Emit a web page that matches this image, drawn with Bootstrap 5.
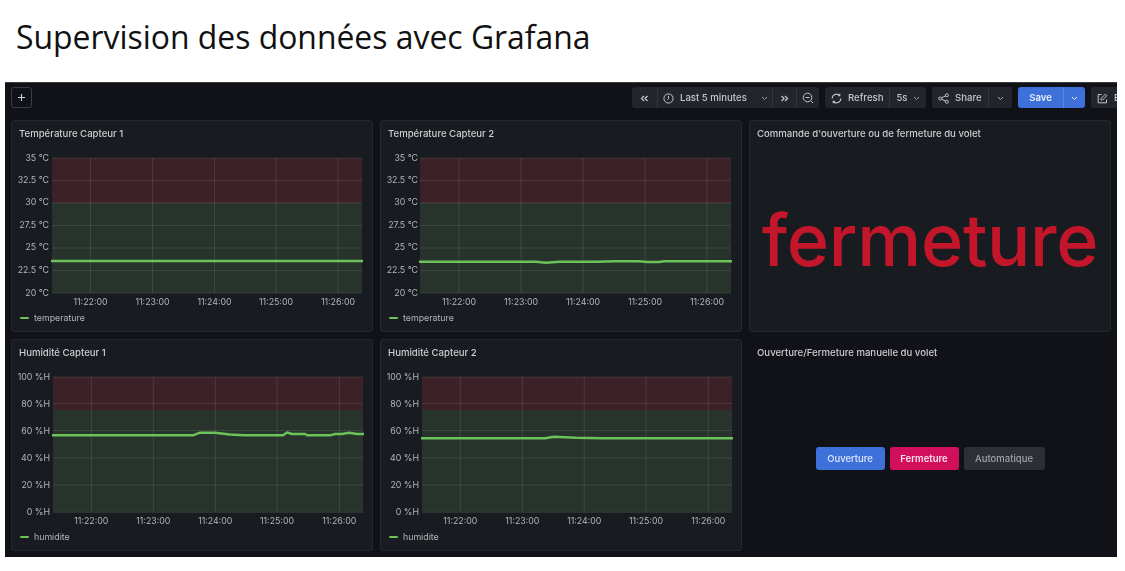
<!DOCTYPE html>
<html lang="fr">
<head>
<meta charset="utf-8">
<title>Supervision des données avec Grafana</title>
<link href="https://cdn.jsdelivr.net/npm/bootstrap@5.3.0/dist/css/bootstrap.min.css" rel="stylesheet">
<style>
html,body{background:#fff;height:571px;overflow:hidden}
.slide-title{font-family:"Open Sans",sans-serif;font-size:31.9px;font-weight:400;color:#111;line-height:42px;margin:0;padding:16px 0 24px 16px}
.dash{margin-left:5px;width:1112px;height:475px;background:#111217;overflow:hidden;font-family:Inter,"Liberation Sans",sans-serif;border-top:1px solid #3a3c40;padding:4px 0 0 6px;filter:blur(.35px)}
.tbar{height:21px;margin-bottom:12px;width:1130px}
.tb{height:21px;background:#22252b;color:#c5c6cb;font-size:9.6px;font-weight:500;display:flex;align-items:center;justify-content:center;gap:5px;border:0;padding:1px 0 0;white-space:nowrap}
.tb+.tb{border-left:1px solid #33363d}
.tb.lft{justify-content:flex-start;padding-left:6px;gap:6px}
.tb.lft.tight{padding-left:5px}
.tgrp{border-radius:3px;overflow:hidden;flex:none}
.tb svg{flex:none}
.plus{width:21px;height:21px;border:1px solid #3a3d44;border-radius:3px;color:#d0d1d5;background:transparent;padding:0;margin-right:600px;flex:none;display:flex;align-items:center;justify-content:center}
.w25{width:25px}.w115{width:115px}.w24{width:24px}.w23{width:23px}.w64{width:64px}.w37{width:37px}.w56{width:56px}.w45{width:45px}.w22{width:22px}.w60{width:60px}
.tb.blue{background:#3d71d9;color:#e8eefb;font-weight:600}
.tb.blue+.tb.blue{border-left-color:#5a86df}
.sep6{margin-right:6px}
.pgrid{display:grid;grid-template-columns:repeat(3,362px);grid-auto-rows:212px;gap:7px}
.pnl{background:#181b1f;border:1px solid #25282e;border-radius:3px;display:flex;flex-direction:column;min-width:0}
.pnl.bare{background:transparent;border-color:transparent}
.ptitle{height:27px;padding:0 0 0 7px;font-size:9.6px;font-weight:500;color:#ccccd1;line-height:25px;white-space:nowrap;flex:none}
.chart{display:block;flex:none}
.chart text{font-family:Inter,"Liberation Sans",sans-serif;font-size:8.8px;fill:#b4b5ba}
.gl{stroke:rgba(255,255,255,.1);stroke-width:1;fill:none}
.dl{stroke:#6cc35a;stroke-width:2.4;fill:none;stroke-linejoin:round}
.lgd{display:flex;align-items:center;gap:5px;padding:0 0 0 8px;height:14px;font-size:8.8px;color:#b4b5ba}
.swatch{width:9px;height:2.5px;background:#6cc35a;border-radius:1px;flex:none}
.bigval{flex:1;display:flex;align-items:center;justify-content:center;color:#c4162a;font-size:72px;font-weight:500;line-height:1;letter-spacing:-.3px}
.actions{flex:1;display:flex;align-items:center;justify-content:center;gap:5px}
.act{height:23px;border:0;border-radius:3px;font-size:9.5px;font-weight:500;padding:2px 0 0;display:flex;align-items:center;justify-content:center}
.act-a{width:69px;background:#3d71d9;color:#dfe7fa}
.act-b{width:69px;background:#d10f5a;color:#fbe4ee;font-weight:600}
.act-c{width:81px;background:#2c2f36;color:#a0a2a9}
</style>
</head>
<body>
<h1 class="slide-title">Supervision des données avec Grafana</h1>
<div class="dash">
  <div class="tbar d-flex align-items-center gap-0">
    <button class="plus" aria-label="Ajouter"><svg width="9" height="9" viewBox="0 0 9 9"><path d="M4.5 1v7M1 4.5h7" stroke="#d0d1d5" stroke-width="1.1"/></svg></button>
    <div class="tgrp d-flex sep6">
      <div class="tb w25"><svg width="9" height="7" viewBox="0 0 9 7" fill="none" stroke="#c5c6cb" stroke-width="1.3"><path d="M4 1 1.500 3.500 4 6M7.500 1 5 3.500 7.500 6"/></svg></div>
      <div class="tb lft tight w115"><svg width="11" height="11" viewBox="0 0 11 11" fill="none" stroke="#c5c6cb"><circle cx="5.500" cy="5.500" r="4.600"/><path d="M5.500 2.800v2.900l-1.200 1"/></svg><span>Last 5 minutes</span><svg class="ms-2" width="7" height="5" viewBox="0 0 7 5" fill="none" stroke="#9a9ca3"><path d="M1 1l2.500 2.500L6 1"/></svg></div>
      <div class="tb w24"><svg width="9" height="7" viewBox="0 0 9 7" fill="none" stroke="#c5c6cb" stroke-width="1.3"><path d="M1.500 1 4 3.500 1.500 6M5 1l2.500 2.500L5 6"/></svg></div>
      <div class="tb w23"><svg width="12" height="12" viewBox="0 0 12 12" fill="none" stroke="#c5c6cb"><circle cx="5.500" cy="5.500" r="4.300"/><path d="M3.500 5.500h4M8.600 8.600 11 11"/></svg></div>
    </div>
    <div class="tgrp d-flex sep6">
      <div class="tb lft w64"><svg width="11" height="11" viewBox="0 0 11 11" fill="none" stroke="#c5c6cb" stroke-width="1.100"><path d="M1.200 5.500A4.300 4.300 0 0 1 8.600 2.500M9.800 5.500A4.300 4.300 0 0 1 2.400 8.500"/><path d="M8.800.8v2H6.900M2.200 10.200v-2h1.900"/></svg><span>Refresh</span></div>
      <div class="tb w37"><span>5s</span><svg width="7" height="5" viewBox="0 0 7 5" fill="none" stroke="#9a9ca3"><path d="M1 1l2.500 2.500L6 1"/></svg></div>
    </div>
    <div class="tgrp d-flex sep6">
      <div class="tb lft w56"><svg width="11" height="11" viewBox="0 0 11 11" fill="none" stroke="#c5c6cb"><circle cx="2.200" cy="5.500" r="1.500"/><circle cx="8.800" cy="2.300" r="1.500"/><circle cx="8.800" cy="8.700" r="1.500"/><path d="M3.500 4.800l4-1.800M3.500 6.200l4 1.800"/></svg><span>Share</span></div>
      <div class="tb w24"><svg width="7" height="5" viewBox="0 0 7 5" fill="none" stroke="#b0b2b8"><path d="M1 1l2.500 2.500L6 1"/></svg></div>
    </div>
    <div class="tgrp d-flex sep6">
      <div class="tb blue w45">Save</div>
      <div class="tb blue w22"><svg width="7" height="5" viewBox="0 0 7 5" fill="none" stroke="#e8eefb"><path d="M1 1l2.500 2.500L6 1"/></svg></div>
    </div>
    <div class="tgrp d-flex">
      <div class="tb lft w60"><svg width="11" height="11" viewBox="0 0 11 11" fill="none" stroke="#c5c6cb"><path d="M9.500 6.500v3.300h-8.300V1.500h3.300"/><path d="M4 5.500 8.300 1.200l1.500 1.500L5.500 7H4z"/></svg><span>Edit</span></div>
    </div>
  </div>

  <div class="pgrid">
    <div class="pnl">
      <div class="ptitle">Température Capteur 1</div>
      <svg class="chart" width="360" height="163" viewBox="0 0 360 163">
        <rect x="40" y="10" width="310" height="45" fill="#3c2228"/><rect x="40" y="55" width="310" height="90" fill="#28332c"/>
        <path class="gl" d="M40 10h310M40 32.500h310M40 55h310M40 77.500h310M40 100h310M40 122.500h310M40 145h310M78.500 10v135M140.500 10v135M202.500 10v135M264 10v135M326 10v135"/>
        <path class="dl" d="M39 113H351"/>
        <g text-anchor="end"><text x="37" y="12.500">35 °C</text><text x="37" y="35">32.5 °C</text><text x="37" y="57">30 °C</text><text x="37" y="80">27.5 °C</text><text x="37" y="102">25 °C</text><text x="37" y="125">22.5 °C</text><text x="37" y="147.500">20 °C</text></g>
        <g text-anchor="middle"><text x="78.500" y="157">11:22:00</text><text x="140.500" y="157">11:23:00</text><text x="202.500" y="157">11:24:00</text><text x="264" y="157">11:25:00</text><text x="326" y="157">11:26:00</text></g>
      </svg>
      <div class="lgd"><span class="swatch"></span><span>temperature</span></div>
    </div>
    <div class="pnl">
      <div class="ptitle">Température Capteur 2</div>
      <svg class="chart" width="360" height="163" viewBox="0 0 360 163">
        <rect x="39" y="10" width="311" height="45" fill="#3c2228"/><rect x="39" y="55" width="311" height="90" fill="#28332c"/>
        <path class="gl" d="M39 10h311M39 32.500h311M39 55h311M39 77.500h311M39 100h311M39 122.500h311M39 145h311M78 10v135M140 10v135M202 10v135M264 10v135M326 10v135"/>
        <path class="dl" d="M38 113.700H155L165 114.700 178 113.700H215L235 113.300H258L266 114H278L283 113.300H351"/>
        <g text-anchor="end"><text x="37" y="12.500">35 °C</text><text x="37" y="35">32.5 °C</text><text x="37" y="57">30 °C</text><text x="37" y="80">27.5 °C</text><text x="37" y="102">25 °C</text><text x="37" y="125">22.5 °C</text><text x="37" y="147.500">20 °C</text></g>
        <g text-anchor="middle"><text x="78" y="157">11:22:00</text><text x="140" y="157">11:23:00</text><text x="202" y="157">11:24:00</text><text x="264" y="157">11:25:00</text><text x="326" y="157">11:26:00</text></g>
      </svg>
      <div class="lgd"><span class="swatch"></span><span>temperature</span></div>
    </div>
    <div class="pnl">
      <div class="ptitle">Commande d'ouverture ou de fermeture du volet</div>
      <div class="bigval">fermeture</div>
    </div>
    <div class="pnl">
      <div class="ptitle">Humidité Capteur 1</div>
      <svg class="chart" width="360" height="163" viewBox="0 0 360 163">
        <rect x="41" y="10" width="310" height="33" fill="#3c2228"/><rect x="41" y="43" width="310" height="102.300" fill="#28332c"/>
        <path class="gl" d="M41 10h310M41 36.500h310M41 63.500h310M41 91h310M41 118h310M41 145.300h310M79.300 10v135M141.300 10v135M203.300 10v135M265 10v135M327.300 10v135"/>
        <path class="dl" d="M40 68.300H181L188 65.700H203L218 67.500 232 68.300H271L275 65.500 280 67H293L295 68.300H318L323 67H330L337 65.700 345 67H352"/>
        <g text-anchor="end"><text x="38" y="13">100 %H</text><text x="38" y="39.500">80 %H</text><text x="38" y="66.500">60 %H</text><text x="38" y="94">40 %H</text><text x="38" y="121">20 %H</text><text x="38" y="148">0 %H</text></g>
        <g text-anchor="middle"><text x="79.300" y="157">11:22:00</text><text x="141.300" y="157">11:23:00</text><text x="203.300" y="157">11:24:00</text><text x="265" y="157">11:25:00</text><text x="327.300" y="157">11:26:00</text></g>
      </svg>
      <div class="lgd"><span class="swatch"></span><span>humidite</span></div>
    </div>
    <div class="pnl">
      <div class="ptitle">Humidité Capteur 2</div>
      <svg class="chart" width="360" height="163" viewBox="0 0 360 163">
        <rect x="41" y="10" width="310" height="33" fill="#3c2228"/><rect x="41" y="43" width="310" height="102.300" fill="#28332c"/>
        <path class="gl" d="M41 10h310M41 36.500h310M41 63.500h310M41 91h310M41 118h310M41 145.300h310M79.300 10v135M141.300 10v135M203.300 10v135M265 10v135M327.300 10v135"/>
        <path class="dl" d="M40 71.300H164L173 69.800 195 70.800 220 71.300H352"/>
        <g text-anchor="end"><text x="38" y="13">100 %H</text><text x="38" y="39.500">80 %H</text><text x="38" y="66.500">60 %H</text><text x="38" y="94">40 %H</text><text x="38" y="121">20 %H</text><text x="38" y="148">0 %H</text></g>
        <g text-anchor="middle"><text x="79.300" y="157">11:22:00</text><text x="141.300" y="157">11:23:00</text><text x="203.300" y="157">11:24:00</text><text x="265" y="157">11:25:00</text><text x="327.300" y="157">11:26:00</text></g>
      </svg>
      <div class="lgd"><span class="swatch"></span><span>humidite</span></div>
    </div>
    <div class="pnl bare">
      <div class="ptitle">Ouverture/Fermeture manuelle du volet</div>
      <div class="actions">
        <button class="btn act act-a">Ouverture</button>
        <button class="btn act act-b">Fermeture</button>
        <button class="btn act act-c">Automatique</button>
      </div>
    </div>
  </div>
</div>
<script src="https://cdn.jsdelivr.net/npm/bootstrap@5.3.0/dist/js/bootstrap.bundle.min.js"></script>
</body>
</html>
